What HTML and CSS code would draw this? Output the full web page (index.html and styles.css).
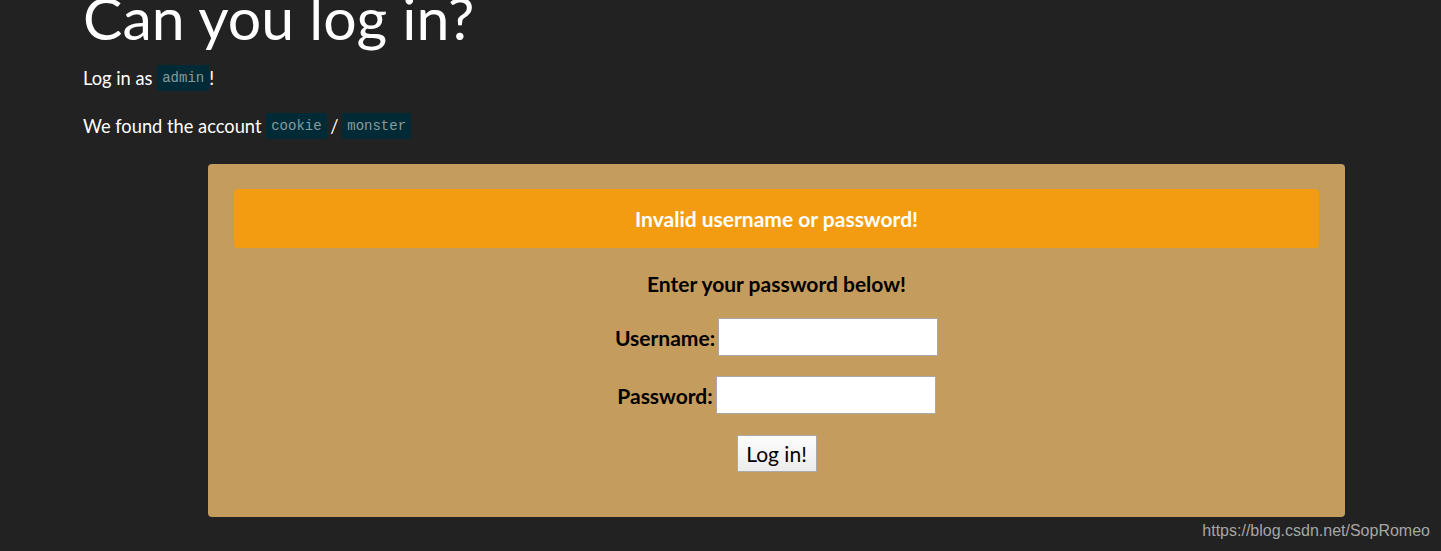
FILE: index.html
```html
<!DOCTYPE html>
<html>
<head>
<meta charset="utf-8">
<link rel="stylesheet" href="styles.css">
</head>
<body>
<div class="page">
  <h1 class="title">Can you log in?</h1>
  <p class="line">Log in as <code class="code">admin</code>!</p>
  <p class="line">We found the account <code class="code">cookie</code> <span class="slash">/</span> <code class="code">monster</code></p>
  <div class="panel">
    <div class="alert">Invalid username or password!</div>
    <p class="prompt">Enter your password below!</p>
    <form class="form">
      <div class="row"><label class="label">Username:</label> <input class="input" type="text"></div>
      <div class="row"><label class="label">Password:</label> <input class="input" type="password"></div>
      <div class="row"><button class="btn" type="button">Log in!</button></div>
    </form>
  </div>
</div>
<div class="watermark">https://blog.csdn.net/SopRomeo</div>
</body>
</html>
```
FILE: styles.css
```css
html, body {
  margin: 0;
  padding: 0;
  background: #222222;
  height: 100%;
  overflow: hidden;
}
body {
  font-family: Lato, "Open Sans", sans-serif;
  color: #ffffff;
  position: relative;
}
.page {
  padding-left: 83px;
}
.title {
  margin: -13px 0 12px 0;
  font-size: 59px;
  font-weight: 400;
  line-height: 62px;
}
.line {
  font-size: 18.3px;
  margin: 0;
  line-height: 26px;
  height: 48px;
  padding-top: 4px;
  box-sizing: border-box;
}
.slash {
  margin: 0 -1px;
}
.code {
  display: inline-block;
  background: #002b36;
  color: #8a9a9a;
  font-family: "Liberation Mono", "DejaVu Sans Mono", monospace;
  font-size: 14px;
  line-height: 26px;
  padding: 0 5px;
  vertical-align: top;
}
.panel {
  margin-left: 125px;
  margin-top: 7px;
  width: 1137px;
  height: 353px;
  box-sizing: border-box;
  background: #c49c5e;
  border-radius: 4px;
  padding: 25px 26px;
  color: #000;
  text-align: center;
}
.alert {
  background: #f39c12;
  border-radius: 4px;
  height: 59px;
  line-height: 59px;
  color: #fff;
  font-weight: 700;
  font-size: 21px;
}
.prompt {
  margin: 22px 0 0 0;
  font-size: 21px;
  font-weight: 700;
  line-height: 28px;
}
.form {
  margin-top: 20px;
}
.row {
  display: flex;
  justify-content: center;
  align-items: center;
  gap: 3px;
  height: 38px;
  margin-bottom: 20px;
}
.label {
  font-size: 21px;
  font-weight: 700;
}
.input {
  width: 220px;
  height: 38px;
  box-sizing: border-box;
  border: 1px solid #a9a9a9;
  background: #fff;
  margin: 0;
}
.btn {
  font-family: Lato, sans-serif;
  font-size: 21px;
  color: #000;
  height: 37px;
  width: 80px;
  padding: 0;
  border: 1px solid #aaa;
  background: linear-gradient(#fdfdfd, #ececec);
  margin: 0;
}
.watermark {
  position: absolute;
  right: 11px;
  top: 522px;
  font-family: "Liberation Sans", Arial, sans-serif;
  font-size: 16px;
  color: #a6a6a6;
}
```
